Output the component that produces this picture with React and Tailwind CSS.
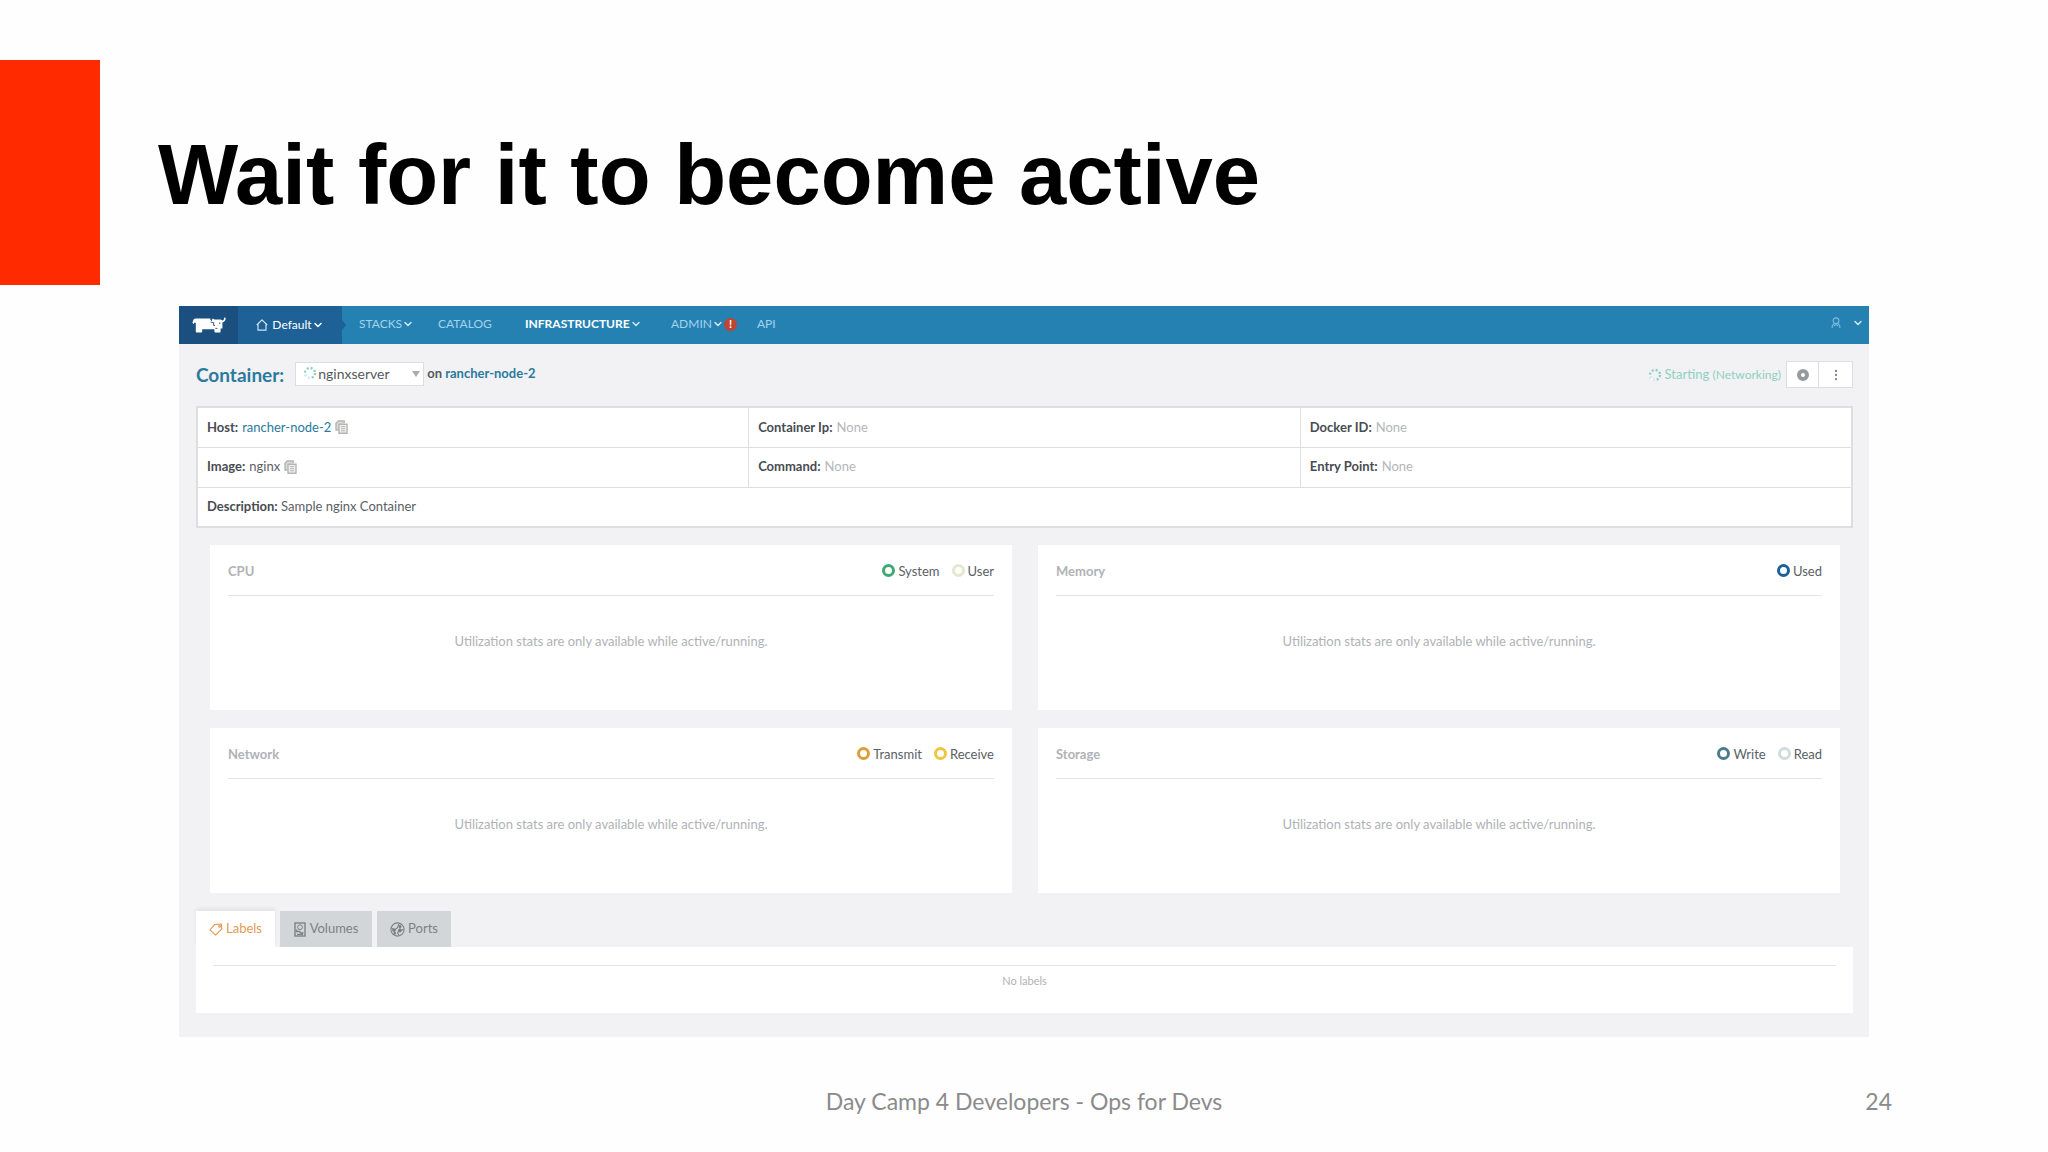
import { ChevronDown, EllipsisVertical } from "lucide-react";

const details = [
  [
    { label: "Host", value: "rancher-node-2", link: true, copy: true },
    { label: "Container Ip" },
    { label: "Docker ID" },
  ],
  [
    { label: "Image", value: "nginx", copy: true },
    { label: "Command" },
    { label: "Entry Point" },
  ],
];

const charts = [
  {
    title: "CPU",
    series: [
      { name: "System", color: "border-[#3fa974]" },
      { name: "User", color: "border-[#e3e8cf]" },
    ],
  },
  { title: "Memory", series: [{ name: "Used", color: "border-[#1b6098]" }] },
  {
    title: "Network",
    series: [
      { name: "Transmit", color: "border-[#d9a03a]" },
      { name: "Receive", color: "border-[#ecc73c]" },
    ],
  },
  {
    title: "Storage",
    series: [
      { name: "Write", color: "border-[#4a7c8a]" },
      { name: "Read", color: "border-[#cfdcdc]" },
    ],
  },
];

function Cow() {
  return (
    <svg viewBox="0 0 34 16" className="h-4 w-[34px]" fill="#fff">
      <path d="M.4 5.4L1.6 2.6Q2.2 1.4 4 1.4H18.4V3L20 4.2V2.4L21 1.6L22.4 2.6H28.6L30.6 3.6Q32 3.4 32.2.6L33.6.8Q34 4.6 30.4 5.4V11.4H28.6V14.4Q28.6 15.6 27.4 15.6H23.4Q22.4 15.6 22.4 14.6V12.2H10.2V14.6Q10.2 15.6 9.2 15.6H4.8Q3.8 15.6 3.8 14.6V6L2.4 5.4L1.6 7.2Z" />
      <path d="M18.6 5.2L21.6 5.6V8.4H23M23.4 11.4H25.4M27.8 5.4V7" stroke="#1b4f80" strokeWidth=".9" fill="none" />
    </svg>
  );
}

function HouseIcon() {
  return (
    <svg viewBox="0 0 12 12" className="size-3" fill="none" stroke="#cfe3f0" strokeWidth="1.2">
      <path d="M.8 6L6 .9L11.2 6M2 5.2V11.2H10V5.2" strokeLinejoin="round" />
    </svg>
  );
}

function Spinner({ className }) {
  return (
    <svg viewBox="0 0 14 14" className={className} fill="none">
      <circle
        cx="7"
        cy="7"
        r="5"
        stroke="#8fd0c0"
        strokeWidth="2.4"
        strokeDasharray="2 1.93"
      />
      <path d="M2 7A5 5 0 0 0 7 12" stroke="#fff" strokeWidth="2.6" opacity=".6" />
    </svg>
  );
}

function CopyIcon() {
  return (
    <svg viewBox="0 0 13 14" className="h-[14px] w-[13px]" fill="none" stroke="#b3b5b3" strokeWidth="1.4">
      <path d="M3.4 10H1V3.2L3.2 1H9.2V3" fill="#dcdddb" />
      <path d="M4 4.2H12V13.2H4Z" fill="#f1f1f0" />
      <path d="M6 6.6H10.2M6 8.7H10.2M6 10.8H10.2" strokeWidth="1" />
    </svg>
  );
}

function UserIcon() {
  return (
    <svg viewBox="0 0 12 14" className="h-3 w-[10px]" fill="none" stroke="#7cc0dc" strokeWidth="1.3">
      <circle cx="6" cy="4.2" r="3.4" />
      <path d="M4 7L1.4 10.4V13M8 7L10.6 10.4V13M3.8 11L5 9H7L8.2 11" />
    </svg>
  );
}

function TagIcon() {
  return (
    <svg viewBox="0 0 14 13" className="h-[13px] w-[14px]" fill="none" stroke="#e39a55" strokeWidth="1.1">
      <path d="M1 6.8L5.6 1.6L12.4 1L12.8 5.8L6.6 12.2Z" strokeLinejoin="round" />
      <circle cx="10.6" cy="3.4" r=".9" />
    </svg>
  );
}

function VolumeIcon() {
  return (
    <svg viewBox="0 0 12 15" className="h-[15px] w-3" fill="none" stroke="#7d8284" strokeWidth="1.4">
      <rect x="1" y="1" width="10" height="13" />
      <circle cx="6" cy="5.2" r="2.4" strokeWidth="1" />
      <path d="M2.5 7.5V9.5H5.5L7 11H9.5M3 12.4H9" />
    </svg>
  );
}

function PortsIcon() {
  return (
    <svg viewBox="0 0 15 15" className="size-[15px]" fill="none" stroke="#7d8284" strokeWidth="1.1">
      <circle cx="7.5" cy="7.5" r="6.6" />
      <path d="M1.5 6L4 8L7 6.4L9 2M4 8L4.6 11.4M10 4V8.4L7.4 10.6M10 8.4L13.4 7.6M7.4 10.6L9 13.6" />
      <circle cx="4" cy="8" r="1.3" fill="#7d8284" />
      <circle cx="10" cy="4.6" r="1" fill="#7d8284" />
      <circle cx="9.8" cy="8.6" r="1.3" fill="#7d8284" />
      <circle cx="4.8" cy="11.4" r=".8" fill="#7d8284" />
    </svg>
  );
}

function NavItem({ children, menu, active, badge }) {
  return (
    <a
      href="#"
      className={
        active
          ? "flex items-center font-bold text-white"
          : "flex items-center text-[#a3d3ea]"
      }
    >
      {children}
      {menu && <ChevronDown className="size-3 text-[#cfe8f4]" strokeWidth={3} />}
      {badge && (
        <span className="flex size-[13px] items-center justify-center rounded-full bg-[#c0442f] text-[11px] font-bold text-white">
          !
        </span>
      )}
    </a>
  );
}

function Navbar() {
  return (
    <nav className="flex h-[38px] items-center bg-[#2681b3] text-[12px]">
      <a href="#" aria-label="Home" className="flex h-full w-[59px] items-center justify-center bg-[#1b4f80]">
        <Cow />
      </a>
      <button className="relative flex h-full w-[104px] items-center justify-center gap-1 bg-[#1d6196] text-white">
        <HouseIcon />
        <span>Default</span>
        <ChevronDown className="-ml-1 size-3" strokeWidth={3} />
        <span className="absolute top-[14px] left-full border-y-[5px] border-l-4 border-y-transparent border-l-[#1d6196]" />
      </button>
      <div className="flex items-center pb-[2px] pl-[17px]">
        <div className="w-[79px]"><NavItem menu>STACKS</NavItem></div>
        <div className="w-[87px]"><NavItem>CATALOG</NavItem></div>
        <div className="w-[146px]"><NavItem menu active>INFRASTRUCTURE</NavItem></div>
        <div className="w-[86px]"><NavItem menu badge>ADMIN</NavItem></div>
        <NavItem>API</NavItem>
      </div>
      <button aria-label="Account" className="mr-[5px] ml-auto flex items-center gap-[11px] pb-1 text-[#cfe8f4]">
        <UserIcon />
        <ChevronDown className="size-3" strokeWidth={3} />
      </button>
    </nav>
  );
}

function TitleBar() {
  return (
    <div className="flex items-center">
      <h2 className="text-[19px] leading-[27px] font-bold text-[#2b7a9d]">
        <label htmlFor="container">Container:</label>
      </h2>
      <div className="relative ml-[11px] pb-[2px]">
        <select
          id="container"
          className="block h-6 w-[129px] appearance-none border border-[#dcdee2] bg-white pl-[22px] text-[14px] leading-5 text-[#555a60]"
        >
          <option>nginxserver</option>
        </select>
        <Spinner className="pointer-events-none absolute top-1 left-2 size-[14px]" />
        <span className="pointer-events-none absolute top-[9px] right-1 border-x-4 border-t-[6px] border-x-transparent border-t-[#a9abae]" />
      </div>
      <p className="ml-[3px] pb-[2px] text-[13px] font-bold text-[#555a60]">
        on <a href="#" className="text-[#2b7a9d]">rancher-node-2</a>
      </p>
      <div className="ml-auto flex items-center gap-[3px] text-[13px] text-[#8fd0c0]">
        <Spinner className="size-[14px]" />
        <span>
          Starting <span className="text-[12px]">(Networking)</span>
        </span>
      </div>
      <div className="ml-[5px] flex h-[27px] divide-x divide-[#dcdee2] border border-[#dcdee2] bg-white">
        <button aria-label="Stop" className="flex w-8 items-center justify-center">
          <span className="size-3 rounded-full border-4 border-[#98999c]" />
        </button>
        <button aria-label="More actions" className="flex w-[33px] items-center justify-center">
          <EllipsisVertical className="size-[14px] text-[#85878a]" />
        </button>
      </div>
    </div>
  );
}

function Details() {
  return (
    <table className="mt-[18px] w-full table-fixed border-2 border-[#dcdee2] bg-white text-[13px] text-[#5b6066]">
      <tbody>
        {details.map((row, i) => (
          <tr key={i} className="h-10 border-b border-[#dcdee2]">
            {row.map(({ label, value, link, copy }) => (
              <td key={label} className="border-r border-[#dcdee2] px-[9px]">
                <div className="flex items-center gap-1">
                  <b className="text-[#474c52]">{label}:</b>
                  {link ? (
                    <a href="#" className="text-[#2b7a9d]">{value}</a>
                  ) : (
                    <span className={value ? "" : "text-[#b4b6ba]"}>{value || "None"}</span>
                  )}
                  {copy && <CopyIcon />}
                </div>
              </td>
            ))}
          </tr>
        ))}
        <tr className="h-10">
          <td colSpan={3} className="px-[9px]">
            <b className="text-[#474c52]">Description:</b> Sample nginx Container
          </td>
        </tr>
      </tbody>
    </table>
  );
}

function ChartCard({ title, series }) {
  return (
    <section className="h-[165px] bg-white px-[18px]">
      <header className="flex h-[51px] items-center border-b border-[#e2e4e7] pt-1 text-[13px]">
        <h3 className="font-bold text-[#b0b2b6]">{title}</h3>
        <div className="ml-auto flex gap-3 text-[#5b6066]">
          {series.map((s) => (
            <span key={s.name} className="flex items-start gap-[3px]">
              <span className={`mt-[2px] size-[13px] rounded-full border-[3px] ${s.color}`} />
              {s.name}
            </span>
          ))}
        </div>
      </header>
      <p className="pt-9 text-center text-[13px] leading-[18px] text-[#b0b2b6]">
        Utilization stats are only available while active/running.
      </p>
    </section>
  );
}

function Tabs() {
  return (
    <div className="mt-[18px] text-[13px]">
      <div role="tablist" className="flex h-9 gap-[5px]">
        <button role="tab" aria-selected="true" className="flex w-[79px] items-center justify-center gap-[3px] bg-white text-[#e39a55] shadow-[0_-3px_4px_rgba(0,0,0,0.06)]">
          <TagIcon />
          Labels
        </button>
        <button role="tab" aria-selected="false" className="flex w-[92px] items-center justify-center gap-1 bg-[#d2d6d8] text-[#7d8284]">
          <VolumeIcon />
          Volumes
        </button>
        <button role="tab" aria-selected="false" className="flex w-[74px] items-center justify-center gap-[3px] bg-[#d2d6d8] text-[#7d8284]">
          <PortsIcon />
          Ports
        </button>
      </div>
      <div role="tabpanel" className="h-[66px] bg-white px-[17px] pt-[18px]">
        <p className="border-t border-[#e2e4e7] pt-[6px] text-center text-[11px] leading-[18px] text-[#b0b2b6]">
          No labels
        </p>
      </div>
    </div>
  );
}

export default function App() {
  return (
    <div className="flex min-h-screen flex-col bg-[#fefefe] font-['Lato',sans-serif]">
      <header className="mt-[60px] flex h-[225px] items-center">
        <div className="h-full w-[100px] bg-[#ff2a00]" />
        <h1 className="ml-[58px] pt-1 font-['Liberation_Sans',sans-serif] text-[85px] leading-none font-bold text-black">
          Wait for it to become active
        </h1>
      </header>
      <main className="mx-[179px] mt-[21px] bg-[#f2f2f5]">
        <Navbar />
        <div className="pt-[17px] pr-4 pb-6 pl-[17px]">
          <TitleBar />
          <Details />
          <div className="mr-[13px] ml-[14px] mt-[17px] grid grid-cols-2 gap-x-[26px] gap-y-[18px]">
            {charts.map((chart) => (
              <ChartCard key={chart.title} {...chart} />
            ))}
          </div>
          <Tabs />
        </div>
      </main>
      <footer className="mx-[156px] mt-12 grid grid-cols-3 text-[23px] leading-8 text-[#8b8b8d]">
        <span className="col-start-2 text-center">Day Camp 4 Developers - Ops for Devs</span>
        <span className="text-right">24</span>
      </footer>
    </div>
  );
}
